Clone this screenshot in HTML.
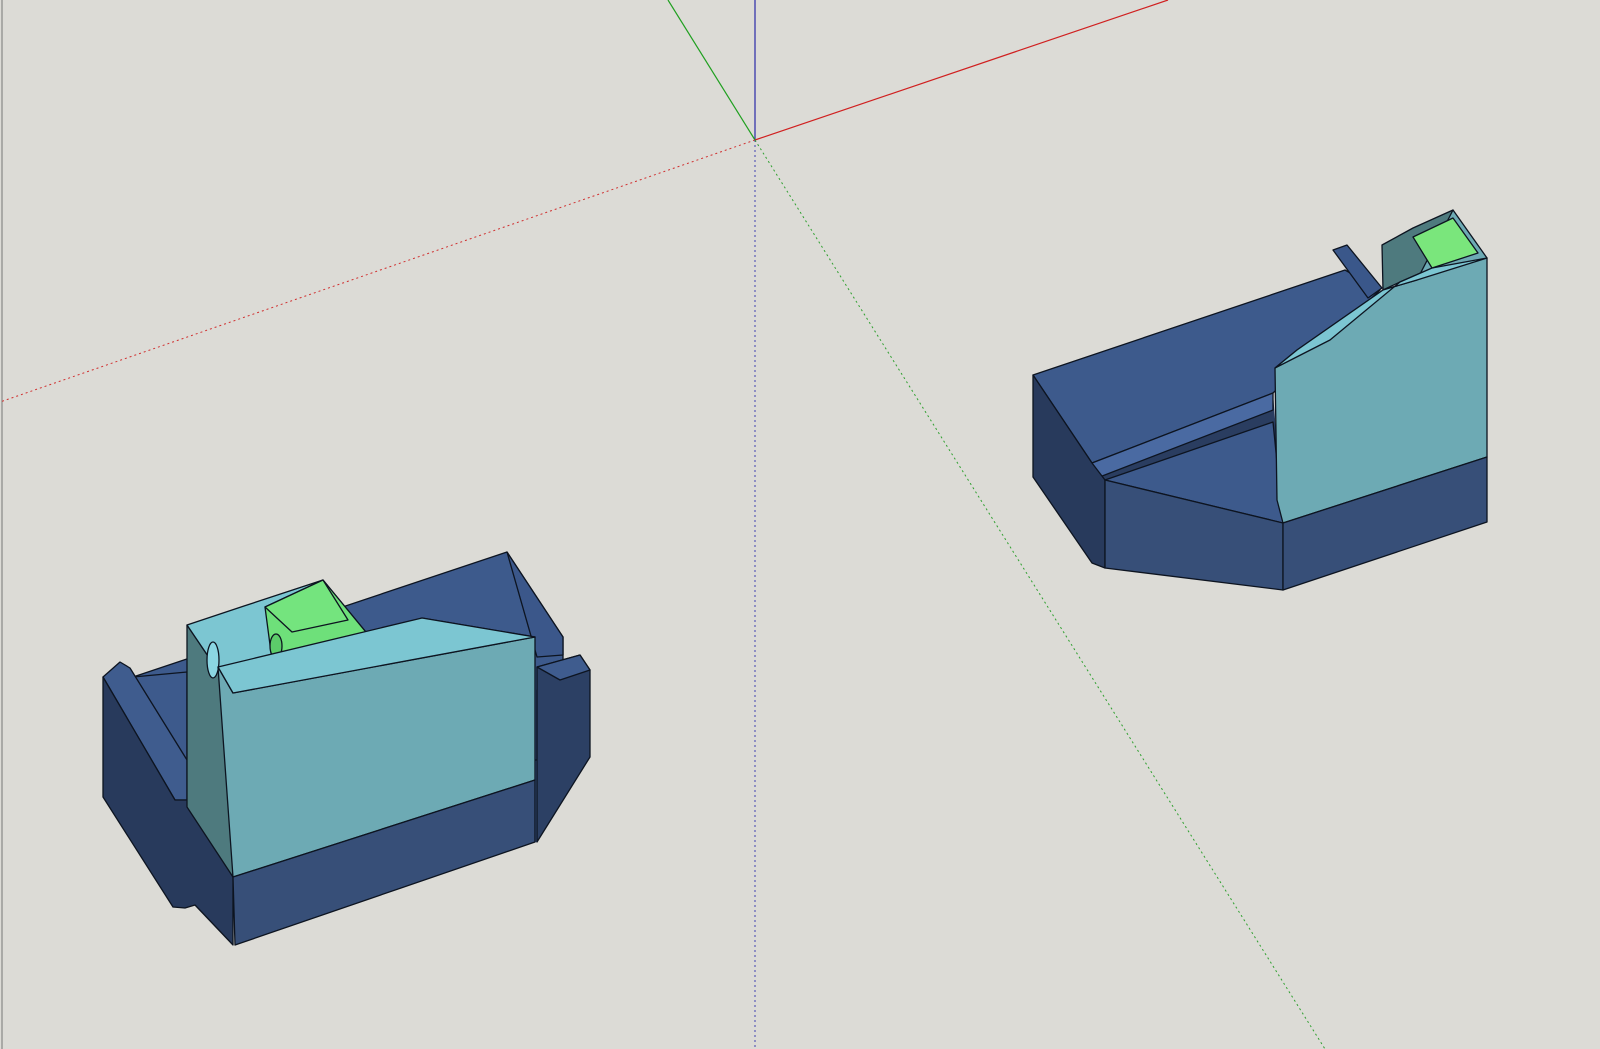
<!DOCTYPE html>
<html><head><meta charset="utf-8"><style>
html,body{margin:0;padding:0;background:#dcdbd6;overflow:hidden}
svg{display:block}
</style></head><body>
<svg width="1600" height="1049" viewBox="0 0 1600 1049" xmlns="http://www.w3.org/2000/svg">
<rect width="1600" height="1049" fill="#dcdbd6"/>
<line x1="2" y1="0" x2="2" y2="1049" stroke="#a9a9a6" stroke-width="2"/>
<line x1="755" y1="140" x2="755" y2="0" stroke="#2a2aa8" stroke-width="1.2"/>
<line x1="755" y1="140" x2="1168" y2="0" stroke="#d02020" stroke-width="1.2"/>
<line x1="755" y1="140" x2="668" y2="0" stroke="#20a020" stroke-width="1.2"/>
<line x1="755" y1="140" x2="0" y2="402" stroke="#d03030" stroke-width="1" stroke-dasharray="2,3"/>
<line x1="755" y1="140" x2="755" y2="1049" stroke="#4040b0" stroke-width="1" stroke-dasharray="2,3"/>
<line x1="755" y1="140" x2="1325" y2="1049" stroke="#30a030" stroke-width="1" stroke-dasharray="2,3"/>

<polygon points="130,668 133,677 507,552 537,600 537,842 233,877 187,807" fill="#3d5a8c"/>
<polygon points="1092,463 1273,393 1283,523 1105,480" fill="#2a3d60"/>

<g stroke="#0d1420" stroke-width="1.3" stroke-linejoin="round">
<polygon points="133,677 507,552 563,637 563,680 537,690 537,760 187,760 187,672" fill="#3d5a8c"/>
<polygon points="507,552 563,637 563,655 537,657" fill="#3b578a"/>
<polygon points="103,677 120,662 130,668 187,760 187,800 175,800" fill="#3f5c8e"/>
<polygon points="103,677 175,800 187,800 233,877 233,945 195,905 185,908 173,907 103,797" fill="#283a5c"/>
<polygon points="537,667 580,655 590,670 590,757 537,842" fill="#2c4064"/>
<polygon points="537,667 580,655 590,670 560,680" fill="#3f5c8e"/>
<polygon points="187,625 233,693 233,877 187,807" fill="#4e7a7e"/>
<polygon points="187,625 244,606 323,580 370,637 422,618 535,637 233,693" fill="#7cc6d2"/>
<polygon points="265,607 323,580 370,637 303,648 290,665 272,660" fill="#6ee07a"/>
<polygon points="265,607 323,580 348,620 292,632" fill="#74e47e"/>
<ellipse cx="276" cy="646" rx="6" ry="12" fill="#5ccc6a"/>
<ellipse cx="213" cy="660" rx="6" ry="18" fill="#8bd6e2"/>
<polygon points="218,667 233,693 535,637 535,780 233,877" fill="#6daab4"/>
<polygon points="218,667 422,618 535,637 233,693" fill="#7cc6d2"/>
<polygon points="233,877 535,780 535,842 235,945" fill="#374f78"/>

<polygon points="1033,375 1345,270 1380,290 1273,393 1092,463" fill="#3d5a8c"/>
<polygon points="1092,463 1273,393 1273,410 1097,478" fill="#4a6aa2"/>
<polygon points="1105,480 1273,422 1283,523" fill="#3d5a8c"/>
<polygon points="1033,375 1092,463 1105,480 1105,568 1092,563 1033,477" fill="#283a5c"/>
<polygon points="1105,480 1283,523 1283,590 1105,568" fill="#374f78"/>
<polygon points="1333,250 1347,245 1382,288 1368,298" fill="#3a578a"/>
<polygon points="1382,245 1413,228 1453,210 1432,268 1400,282 1383,290" fill="#4e7a7e"/>
<polygon points="1275,368 1297,350 1383,290 1417,280 1453,210 1487,258 1487,457 1283,523 1277,500" fill="#6daab4"/>
<polygon points="1275,368 1297,350 1383,290 1417,280 1487,258 1432,268 1400,282 1330,340" fill="#7cc6d2"/>
<polygon points="1413,237 1453,218 1478,253 1432,268" fill="#7ae67c"/>
<polygon points="1283,523 1487,457 1487,522 1283,590" fill="#374f78"/>
</g>
</svg>
</body></html>
